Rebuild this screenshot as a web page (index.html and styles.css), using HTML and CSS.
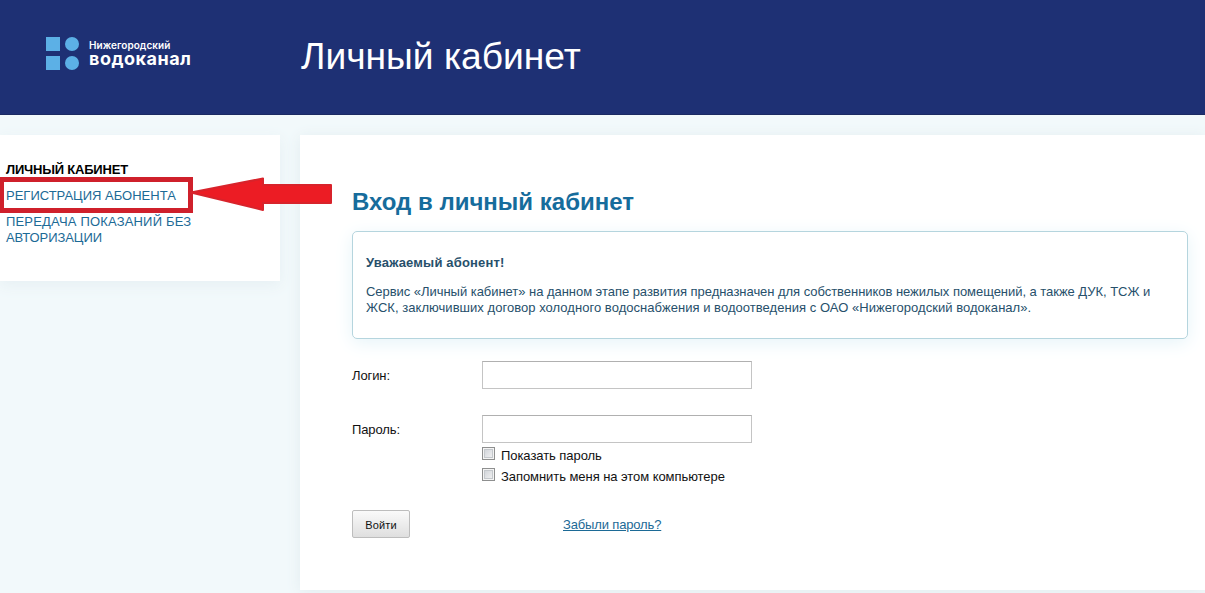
FILE: index.html
```html
<!DOCTYPE html>
<html lang="ru">

<head>
    <meta charset="UTF-8" />
    <meta name="viewport" content="width=device-width, initial-scale=1.0" />
    <title>Личный кабинет</title>
    <link rel="stylesheet" href="styles.css">
</head>

<body>
    <header class="header">
        <a class="logo" href="#">
            <svg class="logo-mark" width="34" height="34" viewBox="0 0 34 34">
                <rect x="0" y="0" width="14" height="14" />
                <circle cx="26" cy="7" r="7" />
                <rect x="0" y="19" width="14" height="14" />
                <circle cx="26" cy="26" r="7" />
            </svg>
            <span class="logo-text">
                <span class="logo-city">Нижегородский</span>
                <span class="logo-name">водоканал</span>
            </span>
        </a>
        <div class="header-title">Личный кабинет</div>
    </header>

    <div class="page">
        <nav class="sidebar">
            <strong class="menu-title">ЛИЧНЫЙ КАБИНЕТ</strong>
            <div class="marked">
                <a href="#">РЕГИСТРАЦИЯ АБОНЕНТА</a>
                <svg class="arrow" width="144" height="36" viewBox="0 0 144 36">
                    <path d="M1 15.5 L73 1.5 V8 H141 V26 H73 V33 Z" />
                </svg>
            </div>
            <a class="menu-send" href="#">ПЕРЕДАЧА ПОКАЗАНИЙ БЕЗ<br><span class="menu-send-end">АВТОРИЗАЦИИ</span></a>
        </nav>

        <main class="content">
            <h1>Вход в личный кабинет</h1>
            <div class="notice">
                <strong>Уважаемый абонент!</strong>
                <p>
                    <span class="line-1">Сервис «Личный кабинет» на данном этапе развития предназначен для собственников нежилых помещений, а также ДУК, ТСЖ и</span><br>
                    <span class="line-2">ЖСК, заключивших договор холодного водоснабжения и водоотведения с ОАО «Нижегородский водоканал».</span>
                </p>
            </div>
            <form action="">
                <div class="row">
                    <label for="login">Логин:</label>
                    <input class="field" type="text" id="login" name="login" />
                </div>
                <div class="row">
                    <label for="password">Пароль:</label>
                    <input class="field" type="password" id="password" name="password" />
                </div>
                <div class="checks">
                    <label class="check"><input type="checkbox" name="show" /><span>Показать пароль</span></label>
                    <label class="check"><input type="checkbox" name="remember" /><span>Запомнить меня на этом компьютере</span></label>
                </div>
                <div class="actions">
                    <button type="button">Войти</button>
                    <a class="forgot" href="#">Забыли пароль?</a>
                </div>
            </form>
        </main>
    </div>
</body>

</html>
```
FILE: styles.css
```css
* {
    margin: 0;
    padding: 0;
    box-sizing: border-box;
}

body {
    height: 593px;
    overflow: hidden;
    font-family: "Liberation Sans", Arial, sans-serif;
    font-size: 13px;
    line-height: 16px;
    color: #111;
    background: #f2f9fb;
}

a {
    color: #1c6a96;
    text-decoration: none;
}

.header {
    display: flex;
    height: 115px;
    background: #1e3074;
    border-bottom: 1px solid #1b2a62;
    color: #fff;
}

.logo {
    display: flex;
    gap: 9px;
    width: 301px;
    padding: 37px 0 0 46px;
    color: #fff;
}

.logo-mark {
    fill: #5cb0e6;
}

.logo-text {
    display: flex;
    flex-direction: column;
    padding-top: 3px;
    font-family: Inter, sans-serif;
}

.logo-city {
    font-size: 10px;
    font-weight: 600;
    line-height: 11px;
    letter-spacing: 0.05px;
}

.logo-name {
    font-size: 18px;
    font-weight: 700;
    line-height: 15px;
    letter-spacing: 0.5px;
}

.header-title {
    padding-top: 35px;
    font-size: 37.2px;
    line-height: 42px;
    white-space: nowrap;
}

.page {
    display: flex;
    align-items: flex-start;
    gap: 20px;
    padding-top: 20px;
}

.sidebar {
    width: 280px;
    height: 146px;
    padding: 27px 0 0 6px;
    background: #fff;
    box-shadow: 0 4px 14px #e6eff3;
    white-space: nowrap;
}

.menu-title {
    display: block;
    color: #000;
    letter-spacing: -0.2px;
}

/* red frame around the registration link */
.marked {
    position: relative;
    width: 194px;
    height: 36px;
    margin: -1px 0 0 -7px;
    padding: 6px 0 0 2px;
    border: 5px solid #cf202b;
}

.menu-send {
    display: block;
    padding-top: 1px;
    letter-spacing: 0.18px;
}

.menu-send-end {
    letter-spacing: -0.08px;
}

.arrow {
    position: absolute;
    left: 186px;
    top: -5px;
    fill: #ec1c24;
    stroke: #d8232b;
    stroke-width: 2;
    stroke-linejoin: round;
}

.content {
    flex: 1;
    height: 455px;
    padding: 52px 17px 0 52px;
    background: #fff;
    box-shadow: 0 2px 14px #e2ecef;
}

h1 {
    font-size: 24px;
    line-height: 30px;
    color: #166c9c;
    white-space: nowrap;
}

.notice {
    height: 108px;
    margin-top: 14px;
    padding: 23px 13px 0;
    border: 1px solid #b5d5de;
    border-radius: 5px;
    box-shadow: 0 4px 18px #e6f4f9;
    color: #27506b;
    white-space: nowrap;
}

.notice strong {
    letter-spacing: 0.17px;
}

.notice p {
    margin-top: 13px;
}

.line-1 {
    letter-spacing: -0.04px;
}

.line-2 {
    letter-spacing: 0.04px;
}

form {
    margin-top: 22px;
}

.row {
    display: flex;
    align-items: center;
    height: 28px;
    margin-bottom: 26px;
}

.row label {
    width: 130px;
    padding-top: 2px;
    letter-spacing: -0.1px;
}

.field {
    width: 270px;
    height: 28px;
    padding: 0 6px;
    border: 1px solid #c4c4c4;
    border-top-color: #b0b0b0;
    background: #fff;
}

.checks {
    display: flex;
    flex-direction: column;
    gap: 5px;
    margin: -22px 0 0 130px;
}

.check {
    display: flex;
    gap: 6px;
    height: 16px;
    white-space: nowrap;
    letter-spacing: -0.06px;
}

.check span {
    padding-top: 1px;
}

.check input {
    appearance: none;
    width: 13px;
    height: 13px;
    border: 1px solid #8e8f8f;
    background: linear-gradient(135deg, #cbcfd5, #f6f6f6);
    box-shadow: inset 0 0 0 1px #f4f4f4, inset 0 0 0 2px #c4c8cc;
}

.actions {
    display: flex;
    margin-top: 26px;
}

button {
    width: 58px;
    height: 28px;
    padding-top: 2px;
    border: 1px solid #bdbdbd;
    border-radius: 2px;
    background: linear-gradient(#fafafa, #dfdfdf);
    font-family: inherit;
    font-size: 11px;
    letter-spacing: 0.1px;
    color: #111;
}

.forgot {
    margin: 7px 0 0 153px;
    letter-spacing: -0.15px;
    text-decoration: underline;
}
```
